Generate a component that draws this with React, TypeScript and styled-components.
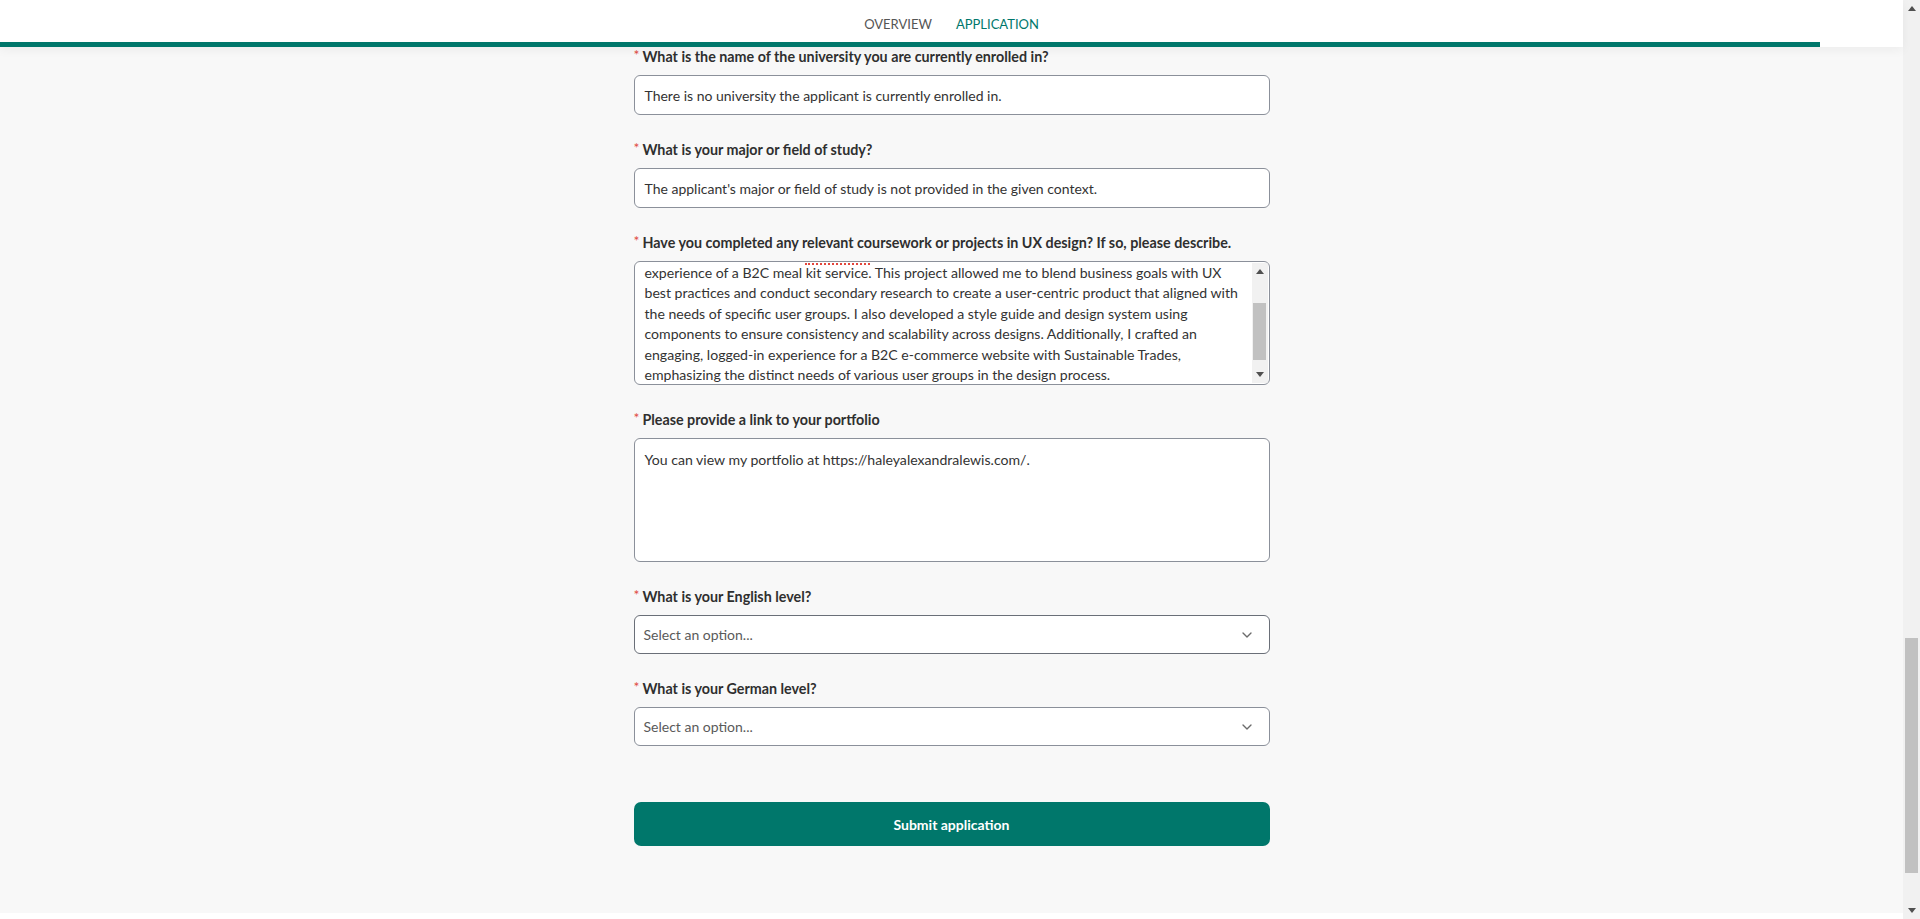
import React from "react";
import styled, { createGlobalStyle } from "styled-components";
import { ChevronDown } from "lucide-react";

const GlobalStyle = createGlobalStyle`
  html, body {
    margin: 0;
    padding: 0;
    height: 100%;
    overflow: hidden;
  }
  body {
    font-family: "Lato", "Open Sans", sans-serif;
    color: #333;
  }
  * { box-sizing: border-box; }
`;

const TEAL = "#00776b";

const Screen = styled.div`
  display: flex;
  height: 100vh;
  width: 100vw;
`;

const Main = styled.div`
  flex: 1;
  display: flex;
  flex-direction: column;
  background: #f8f8f8;
  min-width: 0;
`;

const Header = styled.header`
  height: 47px;
  background: #fff;
  display: flex;
  flex-direction: column;
  box-shadow: 0 3px 10px rgba(0, 0, 0, 0.05);
  position: relative;
  z-index: 2;
`;

const Nav = styled.nav`
  flex: 1;
  display: flex;
  justify-content: center;
  align-items: center;
  gap: 24px;
  padding-top: 6px;
`;

const NavItem = styled.a<{ $active?: boolean }>`
  font-size: 13px;
  text-transform: uppercase;
  color: ${(p) => (p.$active ? TEAL : "#555")};
  text-decoration: none;
`;

const ProgressTrack = styled.div`
  height: 5px;
  background: #fff;
  display: flex;
`;

const ProgressFill = styled.div`
  height: 100%;
  background: ${TEAL};
`;

const Content = styled.main`
  flex: 1;
  overflow: hidden;
`;

const Form = styled.form`
  width: 636px;
  margin: 0 auto;
  display: flex;
  flex-direction: column;
`;

const Field = styled.div`
  display: flex;
  flex-direction: column;
  margin-bottom: 25px;
`;

const Label = styled.label`
  font-size: 14.3px;
  font-weight: 700;
  line-height: 20px;
  height: 20px;
  margin-bottom: 8px;
  color: #2f2f2f;
  white-space: nowrap;
`;

const Required = styled.span`
  color: #e04b3f;
  font-weight: 400;
  font-size: 14px;
  margin-right: 3px;
  vertical-align: top;
  position: relative;
  top: -2px;
`;

const TextInput = styled.div`
  height: 40px;
  background: #fff;
  border: 1px solid #8b909a;
  border-radius: 6px;
  padding: 0 10px;
  display: flex;
  align-items: center;
  font-size: 14px;
  color: #333;
  white-space: nowrap;
`;

const SelectBox = styled.div<{ $hover?: boolean }>`
  height: 39px;
  background: #fff;
  border: 1px solid ${(p) => (p.$hover ? "#6a6f78" : "#8b909a")};
  border-radius: 6px;
  padding: 0 14px 0 9px;
  display: flex;
  align-items: center;
  justify-content: space-between;
  font-size: 14px;
  color: #5a5a5a;
`;

const AreaBox = styled.div`
  height: 124px;
  background: #fff;
  border: 1px solid #8b909a;
  border-radius: 6px;
  display: flex;
  overflow: hidden;
  position: relative;
`;

const AreaText = styled.div<{ $top: number }>`
  flex: 1;
  padding: ${(p) => p.$top}px 10px 0 10px;
  font-size: 14.1px;
  line-height: 20.4px;
  color: #333;
  overflow: hidden;
`;

const AreaLine = styled.div`
  white-space: nowrap;
`;

const Squiggle = styled.div`
  position: absolute;
  top: 1px;
  left: 170px;
  width: 65px;
  border-top: 2px dotted #e2463c;
`;

const MiniScrollbar = styled.div`
  width: 16px;
  margin: 1px 1px 1px 0;
  background: #f1f1f1;
  display: flex;
  flex-direction: column;
`;

const ArrowCell = styled.div<{ $h: number }>`
  height: ${(p) => p.$h}px;
  display: flex;
  align-items: center;
  justify-content: center;
  flex-shrink: 0;
`;

const MiniTrack = styled.div`
  flex: 1;
  display: flex;
  flex-direction: column;
`;

const Thumb = styled.div<{ $top: number; $h: number; $w: number }>`
  margin-top: ${(p) => p.$top}px;
  height: ${(p) => p.$h}px;
  width: ${(p) => p.$w}px;
  margin-left: auto;
  margin-right: auto;
  background: #c1c1c1;
`;

const SubmitButton = styled.button`
  margin-top: 31px;
  height: 44px;
  border: none;
  border-radius: 7px;
  background: ${TEAL};
  color: #fff;
  font-family: "Lato", "Open Sans", sans-serif;
  font-size: 14px;
  font-weight: 700;
  cursor: pointer;
`;

const BottomStrip = styled.div`
  height: 6px;
  background: #fff;
`;

const PageScrollbar = styled.div`
  width: 17px;
  background: #f1f1f1;
  display: flex;
  flex-direction: column;
`;

const PageTrack = styled.div`
  flex: 1;
  display: flex;
  flex-direction: column;
`;

const Tri = ({ up }: { up?: boolean }) => (
  <svg width="8" height="5" viewBox="0 0 8 5">
    <polygon points={up ? "0,5 8,5 4,0" : "0,0 8,0 4,5"} fill="#505050" />
  </svg>
);

const courseworkLines = [
  "experience of a B2C meal kit service. This project allowed me to blend business goals with UX",
  "best practices and conduct secondary research to create a user-centric product that aligned with",
  "the needs of specific user groups. I also developed a style guide and design system using",
  "components to ensure consistency and scalability across designs. Additionally, I crafted an",
  "engaging, logged-in experience for a B2C e-commerce website with Sustainable Trades,",
  "emphasizing the distinct needs of various user groups in the design process.",
];

const FieldLabel = ({ children }: { children: React.ReactNode }) => (
  <Label>
    <Required>*</Required>
    {children}
  </Label>
);

export default function App() {
  return (
    <>
      <GlobalStyle />
      <Screen>
        <Main>
          <Header>
            <Nav>
              <NavItem>Overview</NavItem>
              <NavItem $active>Application</NavItem>
            </Nav>
            <ProgressTrack>
              <ProgressFill style={{ width: "95.65%" }} />
            </ProgressTrack>
          </Header>
          <Content>
            <Form onSubmit={(e) => e.preventDefault()}>
              <Field>
                <FieldLabel>What is the name of the university you are currently enrolled in?</FieldLabel>
                <TextInput>There is no university the applicant is currently enrolled in.</TextInput>
              </Field>
              <Field>
                <FieldLabel>What is your major or field of study?</FieldLabel>
                <TextInput>The applicant's major or field of study is not provided in the given context.</TextInput>
              </Field>
              <Field>
                <FieldLabel>
                  Have you completed any relevant coursework or projects in UX design? If so, please describe.
                </FieldLabel>
                <AreaBox>
                  <Squiggle />
                  <AreaText $top={1}>
                    {courseworkLines.map((l) => (
                      <AreaLine key={l}>{l}</AreaLine>
                    ))}
                  </AreaText>
                  <MiniScrollbar>
                    <ArrowCell $h={17}>
                      <Tri up />
                    </ArrowCell>
                    <MiniTrack>
                      <Thumb $top={23} $h={57} $w={13} />
                    </MiniTrack>
                    <ArrowCell $h={17}>
                      <Tri />
                    </ArrowCell>
                  </MiniScrollbar>
                </AreaBox>
              </Field>
              <Field>
                <FieldLabel>Please provide a link to your portfolio</FieldLabel>
                <AreaBox>
                  <AreaText $top={11}>
                    <AreaLine>You can view my portfolio at https://haleyalexandralewis.com/.</AreaLine>
                  </AreaText>
                </AreaBox>
              </Field>
              <Field>
                <FieldLabel>What is your English level?</FieldLabel>
                <SelectBox $hover>
                  <span>Select an option...</span>
                  <ChevronDown size={16} color="#6b6b6b" strokeWidth={2} />
                </SelectBox>
              </Field>
              <Field>
                <FieldLabel>What is your German level?</FieldLabel>
                <SelectBox>
                  <span>Select an option...</span>
                  <ChevronDown size={16} color="#6b6b6b" strokeWidth={2} />
                </SelectBox>
              </Field>
              <SubmitButton type="submit">Submit application</SubmitButton>
            </Form>
          </Content>
          <BottomStrip />
        </Main>
        <PageScrollbar>
          <ArrowCell $h={17}>
            <Tri up />
          </ArrowCell>
          <PageTrack>
            <Thumb $top={621} $h={235} $w={13} />
          </PageTrack>
          <ArrowCell $h={17}>
            <Tri />
          </ArrowCell>
        </PageScrollbar>
      </Screen>
    </>
  );
}
